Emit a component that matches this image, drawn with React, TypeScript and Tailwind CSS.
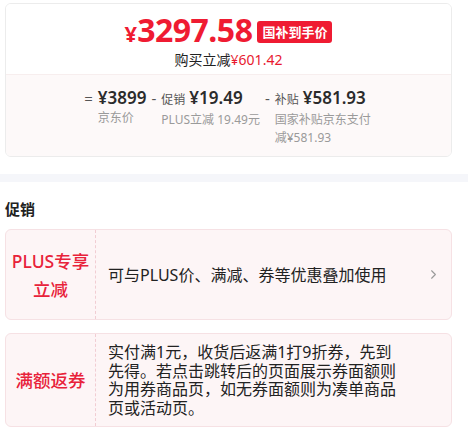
import { ChevronRight } from 'lucide-react'

const font = "font-['Noto_Sans','Noto_Sans_CJK_SC',sans-serif]"

type Part = { sign: string; tag?: string; value: string; note: string; noteW?: string }

const parts: Part[] = [
  { sign: '=', value: '¥3899', note: '京东价' },
  { sign: '-', tag: '促销', value: '¥19.49', note: 'PLUS立减 19.49元' },
  { sign: '-', tag: '补贴', value: '¥581.93', note: '国家补贴京东支付减¥581.93', noteW: 'w-[98px]' },
]

function PromoCard({ label, children, arrow }: { label: React.ReactNode; children: React.ReactNode; arrow?: boolean }) {
  return (
    <div className="flex rounded-[6px] border border-[#f6e1e4] bg-[#fdf5f6]">
      <div className="flex w-[90px] shrink-0 items-center justify-center border-r border-dashed border-[#f1cdd3] text-center text-[17.5px] font-medium leading-[28px] text-[#e8223a]">
        {label}
      </div>
      <div className="flex flex-1 items-center pl-[12px] pr-[10px] text-[16px] text-[#222]">
        <div className="flex-1">{children}</div>
        {arrow && <ChevronRight className="h-[15px] w-[15px] text-[#999]" strokeWidth={1.75} />}
      </div>
    </div>
  )
}

export default function App() {
  return (
    <div className={`${font} w-[468px] h-[440px] bg-white pt-[3px]`}>
      <div className="ml-[5px] mr-[16px] overflow-hidden rounded-[6px] border border-[#ececec]">
        <div className="bg-white pt-[10px] pb-[4px]">
          <div className="flex h-[36px] items-center justify-center">
            <span className="flex items-baseline font-bold text-[#ef1b32]">
              <span className="text-[22px]">¥</span>
              <span className="text-[32px] leading-none tracking-[-0.5px]">3297.58</span>
            </span>
            <span className="ml-[5px] rounded-[3px] bg-[#ef1b32] px-[5px] text-[13px] font-bold leading-[22px] text-white">国补到手价</span>
          </div>
          <div className="text-center text-[14px] leading-[20px] text-[#222]">
            购买立减<span className="text-[#e8192f]">¥601.42</span>
          </div>
        </div>
        <div className="flex justify-center gap-[5px] border-t border-[#f7eeee] bg-[#fdf9f9] pt-[12px] pb-[9px]">
          {parts.map((p) => (
            <div key={p.value} className="flex">
              <span className="mr-[5px] text-[15px] leading-[22px] text-[#555]">{p.sign}</span>
              <div className="flex flex-col">
                <div className="flex items-baseline leading-[22px]">
                  {p.tag && <span className="mr-[4px] text-[12px] text-[#555]">{p.tag}</span>}
                  <span className="text-[17px] font-semibold text-[#2b2b2b]">{p.value}</span>
                </div>
                <div className={`${p.noteW ?? ''} text-[12px] leading-[18px] text-[#9a9a9a]`}>{p.note}</div>
              </div>
            </div>
          ))}
        </div>
      </div>

      <div className="mt-[17px] h-[8px] bg-[#f5f6fa]" />

      <div className="pl-[5px] pr-[16px]">
        <div className="mt-[16px] text-[15px] font-bold leading-[22px] text-[#222]">促销</div>
        <div className="mt-[9px] flex flex-col gap-[13px]">
          <PromoCard arrow label={<span>PLUS专享<br />立减</span>}>
            <div className="h-[89px] flex items-center">可与PLUS价、满减、券等优惠叠加使用</div>
          </PromoCard>
          <PromoCard label="满额返券">
            <div className="py-[9px] text-[16px] leading-[18.5px]">
              实付满1元，收货后返满1打9折券，先到<br />
              先得。若点击跳转后的页面展示券面额则<br />
              为用券商品页，如无券面额则为凑单商品<br />
              页或活动页。
            </div>
          </PromoCard>
        </div>
      </div>
    </div>
  )
}
